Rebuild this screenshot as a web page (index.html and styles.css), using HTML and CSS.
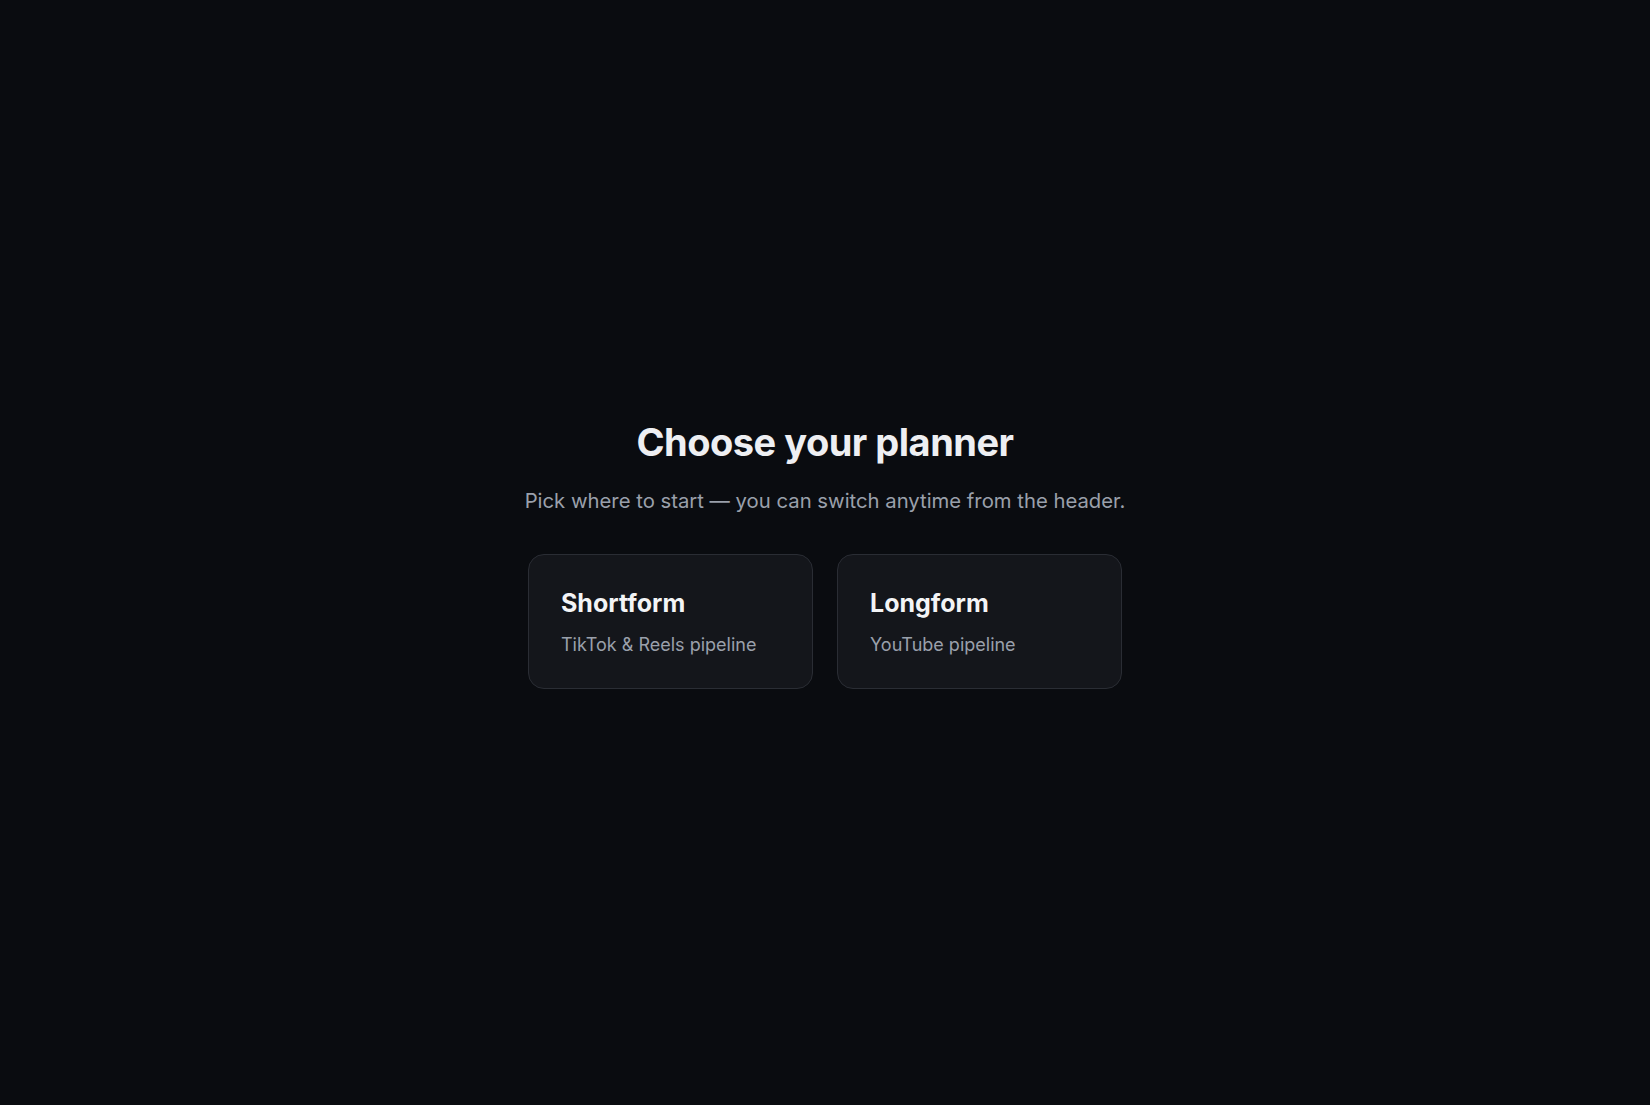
FILE: index.html
```html
<!DOCTYPE html>
<html lang="en">
<head>
<meta charset="utf-8">
<title>Choose your planner</title>
<link rel="stylesheet" href="styles.css">
</head>
<body>
<main class="page">
  <section class="chooser">
    <h1 class="title">Choose your planner</h1>
    <p class="subtitle">Pick where to start — you can switch anytime from the header.</p>
    <div class="options">
      <button class="card" type="button">
        <span class="card-title">Shortform</span>
        <span class="card-desc">TikTok &amp; Reels pipeline</span>
      </button>
      <button class="card" type="button">
        <span class="card-title">Longform</span>
        <span class="card-desc">YouTube pipeline</span>
      </button>
    </div>
  </section>
</main>
</body>
</html>
```

FILE: styles.css
```css
html, body {
  margin: 0;
  padding: 0;
  height: 100%;
}
body {
  background: #0a0c10;
  font-family: Inter, "Noto Sans", sans-serif;
  color: #f1f2f4;
}
.page {
  min-height: 100vh;
  display: flex;
  align-items: center;
  justify-content: center;
}
.chooser {
  display: flex;
  flex-direction: column;
  align-items: center;
  padding-top: 4px;
}
.title {
  margin: 0;
  font-size: 38px;
  font-weight: 700;
  letter-spacing: -0.5px;
  color: #eeeff2;
  line-height: 1.2;
}
.subtitle {
  margin: 21px 0 0;
  font-size: 20.3px;
  color: #9aa0ab;
  line-height: 1.4;
}
.options {
  display: flex;
  gap: 24px;
  margin-top: 39px;
}
.card {
  width: 285px;
  height: 135px;
  box-sizing: border-box;
  padding: 33px 32px 0;
  background: #14161b;
  border: 1px solid #2a2d34;
  border-radius: 16px;
  display: flex;
  flex-direction: column;
  align-items: flex-start;
  text-align: left;
  font-family: inherit;
  cursor: pointer;
}
.card-title {
  font-size: 25px;
  font-weight: 700;
  color: #f3f4f6;
  line-height: 1.2;
}
.card-desc {
  margin-top: 15px;
  font-size: 18px;
  color: #9aa0ab;
  line-height: 1.3;
}
```
